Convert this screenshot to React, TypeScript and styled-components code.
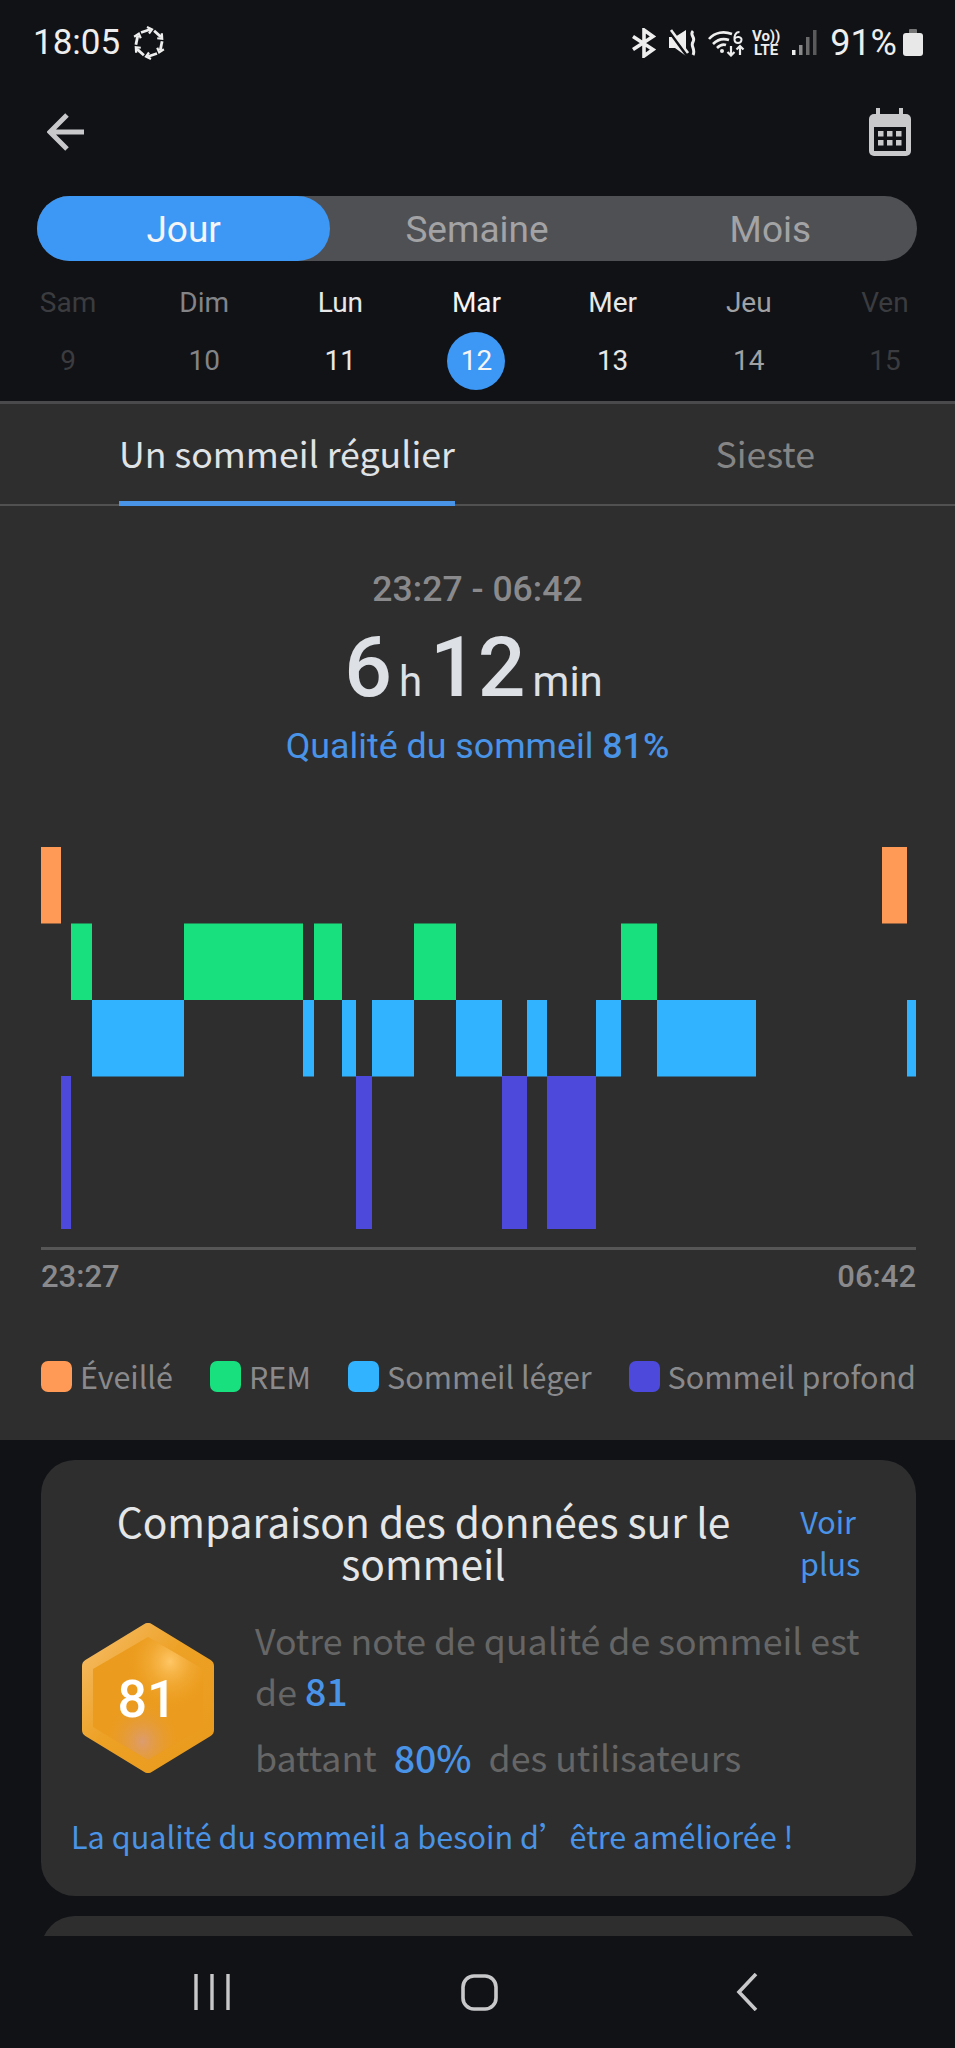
import styled, { createGlobalStyle } from "styled-components"

const GlobalStyle = createGlobalStyle`
  html, body {
    margin: 0;
    padding: 0;
    background: #111216;
  }
  * {
    box-sizing: border-box;
  }
`

const ROBOTO = `Roboto, "Liberation Sans", sans-serif`
const NOTO = `"Noto Sans CJK SC", "Noto Sans", sans-serif`

const Screen = styled.div`
  width: 955px;
  height: 2048px;
  background: #111216;
  display: flex;
  flex-direction: column;
  overflow: hidden;
  font-family: ${ROBOTO};
`

const StatusBar = styled.div`
  height: 84px;
  flex: none;
  display: flex;
  align-items: center;
  justify-content: space-between;
  padding: 1px 32px 0 33px;
  color: #eeeeee;
`

const StatusGroup = styled.div`
  display: flex;
  align-items: center;
`

const StatusText = styled.span<{ $size: number }>`
  font-size: ${(p) => p.$size}px;
  line-height: 40px;
`

const StatusItem = styled.span<{ $gap: number }>`
  display: flex;
  align-items: center;
  margin-left: ${(p) => p.$gap}px;
`

const VoLte = styled.span`
  display: flex;
  flex-direction: column;
  align-items: center;
  font-size: 15px;
  line-height: 14px;
  font-weight: 700;
  width: 28px;
  color: #eeeeee;
`

const TopBar = styled.div`
  height: 96px;
  flex: none;
  display: flex;
  align-items: center;
  justify-content: space-between;
  padding: 0 44px 0 47px;
  margin-bottom: 16px;
`

const Segments = styled.div`
  height: 65px;
  flex: none;
  margin: 0 38px 0 37px;
  background: #4f5053;
  border-radius: 33px;
  display: grid;
  grid-template-columns: repeat(3, 1fr);
`

const Segment = styled.div<{ $active?: boolean }>`
  display: flex;
  align-items: center;
  justify-content: center;
  padding-top: 2px;
  font-size: 37px;
  border-radius: 33px;
  color: ${(p) => (p.$active ? "#f5f5f5" : "#a3a3a5")};
  background: ${(p) => (p.$active ? "#3d97f5" : "transparent")};
`

const Days = styled.div`
  flex: none;
  display: grid;
  grid-template-columns: repeat(7, 1fr);
  padding: 24px 2px 11px 0;
  row-gap: 11px;
`

const WeekDay = styled.div<{ $color: string }>`
  height: 36px;
  line-height: 36px;
  text-align: center;
  font-size: 28px;
  color: ${(p) => p.$color};
`

const DayCell = styled.div`
  height: 58px;
  display: flex;
  align-items: center;
  justify-content: center;
`

const DayNumber = styled.div<{ $color: string; $active?: boolean }>`
  width: 58px;
  height: 58px;
  line-height: 58px;
  text-align: center;
  border-radius: 50%;
  font-size: 28px;
  color: ${(p) => p.$color};
  background: ${(p) => (p.$active ? "#3d97f5" : "transparent")};
`

const Main = styled.div`
  flex: 1;
  min-height: 0;
  overflow: hidden;
  display: flex;
  flex-direction: column;
`

const SleepPanel = styled.section`
  flex: none;
  height: 1039px;
  background: #2e2e2e;
  border-top: 3px solid #4a4a4c;
  display: flex;
  flex-direction: column;
`

const Tabs = styled.div`
  height: 102px;
  flex: none;
  display: flex;
  justify-content: space-between;
  padding: 0 140px 0 119px;
  border-bottom: 2px solid #515151;
`

const Tab = styled.div<{ $active?: boolean }>`
  height: 102px;
  line-height: 98px;
  font-family: ${NOTO};
  font-size: 35.7px;
  color: ${(p) => (p.$active ? "#e0e3e6" : "#858585")};
  border-bottom: 5px solid ${(p) => (p.$active ? "#4a94e8" : "transparent")};
`

const Hero = styled.div`
  display: flex;
  flex-direction: column;
  align-items: center;
  padding-top: 63px;
`

const TimeRange = styled.div`
  font-size: 35.6px;
  line-height: 40px;
  font-weight: 500;
  color: #8a8a8c;
`

const Duration = styled.div`
  display: flex;
  align-items: baseline;
  color: #dde1e6;
  margin-top: 11px;
  height: 96px;
  line-height: 96px;
`

const DurationValue = styled.span`
  font-size: 84px;
  font-weight: 500;
`

const DurationUnit = styled.span`
  font-size: 42px;
  margin: 0 8px 0 7px;
`

const Quality = styled.div`
  margin-top: 9px;
  font-size: 35.8px;
  line-height: 42px;
  color: #4a94e8;
  strong {
    font-weight: 500;
  }
`

const ChartBlock = styled.div`
  margin: 80px 39px 0 41px;
`

const ChartSvg = styled.svg`
  display: block;
  width: 875px;
  height: 382px;
`

const Axis = styled.div`
  margin-top: 18px;
  border-top: 3px solid #565656;
  display: flex;
  justify-content: space-between;
  padding-top: 9px;
  font-size: 31px;
  line-height: 36px;
  font-weight: 500;
  color: #8a8a8c;
`

const Legend = styled.div`
  margin: 63px 39px 0 41px;
  display: flex;
  justify-content: space-between;
  font-family: ${NOTO};
`

const LegendItem = styled.div`
  display: flex;
  align-items: center;
  gap: 8px;
  font-size: 30.5px;
  line-height: 36px;
  color: #8a8a8c;
`

const Swatch = styled.span<{ $color: string }>`
  width: 31px;
  height: 31px;
  border-radius: 7px;
  background: ${(p) => p.$color};
`

const Card = styled.section`
  flex: none;
  margin: 20px 39px 0 41px;
  height: 436px;
  background: #2e2e2e;
  border-radius: 34px;
  padding: 40px 60px 0 30px;
  font-family: ${NOTO};
`

const NextCard = styled(Card)`
  height: 100px;
`

const CardHead = styled.div`
  display: flex;
  align-items: flex-start;
`

const CardTitle = styled.h2`
  flex: 1;
  margin: 0;
  padding-right: 24px;
  text-align: center;
  font-size: 40.7px;
  line-height: 42px;
  font-weight: 400;
  color: #e4e6e8;
`

const MoreLink = styled.a`
  width: 56px;
  text-align: center;
  font-size: 30.5px;
  line-height: 42px;
  color: #4a94e8;
`

const ScoreRow = styled.div`
  display: flex;
  align-items: flex-start;
  margin-top: 31px;
`

const Badge = styled.svg`
  flex: none;
  margin: 8px 41px 0 11px;
  width: 132px;
  height: 150px;
`

const ScoreText = styled.div`
  flex: none;
  width: 610px;
  font-size: 35.7px;
  color: #666666;
`

const ScoreLine = styled.p`
  margin: 0;
  line-height: 50px;
`

const ScoreSecond = styled(ScoreLine)`
  margin-top: 16px;
  display: flex;
  gap: 17px;
`

const Blue = styled.b`
  color: #4a94e8;
  font-weight: 500;
  font-size: 37.5px;
`

const Advice = styled.p`
  margin: 34px 0 0;
  font-size: 30.6px;
  line-height: 40px;
  color: #4a94e8;
`

const NavBar = styled.nav`
  height: 112px;
  flex: none;
  display: grid;
  grid-template-columns: repeat(3, 1fr);
  padding: 0 74px 0 78px;
  background: #111216;
  position: relative;
`

const NavSlot = styled.div`
  display: flex;
  align-items: center;
  justify-content: center;
`

const days = [
  { d: "Sam", n: "9", color: "#3b3c3f" },
  { d: "Dim", n: "10", color: "#838487" },
  { d: "Lun", n: "11", color: "#e8e8e8" },
  { d: "Mar", n: "12", color: "#f5f5f5", active: true },
  { d: "Mer", n: "13", color: "#e8e8e8" },
  { d: "Jeu", n: "14", color: "#a0a1a3" },
  { d: "Ven", n: "15", color: "#3b3c3f" },
]

const colors = { awake: "#ff9a56", rem: "#18e07e", light: "#31b3ff", deep: "#4d4adb" }

// row, x start, x end in px of the chart
const stages: [keyof typeof colors, number, number, number][] = [
  ["awake", 0, 0, 20],
  ["awake", 0, 841, 866],
  ["rem", 1, 30, 51],
  ["rem", 1, 143, 262],
  ["rem", 1, 273, 301],
  ["rem", 1, 373, 415],
  ["rem", 1, 580, 616],
  ["light", 2, 51, 143],
  ["light", 2, 262, 273],
  ["light", 2, 301, 315],
  ["light", 2, 331, 373],
  ["light", 2, 415, 461],
  ["light", 2, 486, 506],
  ["light", 2, 555, 580],
  ["light", 2, 616, 715],
  ["light", 2, 866, 875],
  ["deep", 3, 20, 30],
  ["deep", 3, 315, 331],
  ["deep", 3, 461, 486],
  ["deep", 3, 506, 555],
]

const SyncIcon = () => (
  <svg width="34" height="34" viewBox="0 0 34 34" style={{ marginLeft: 12 }}>
    {[0, 60, 120, 180, 240, 300].map((a) => (
      <g key={a} transform={`rotate(${a} 17 17)`} stroke="#eeeeee" fill="none">
        <path d="M9 6.5 L18 3.5" strokeWidth="2.8" />
        <path d="M15 1 L20 3.5 L17 7.5" strokeWidth="2.2" />
      </g>
    ))}
  </svg>
)

const BluetoothIcon = () => (
  <svg width="26" height="30" viewBox="0 0 26 30" fill="none" stroke="#eeeeee" strokeWidth="3.6">
    <path d="M2 8.5 L22 21.5 L13 28 V2 L22 8.5 L2 21.5" />
  </svg>
)

const MuteIcon = () => (
  <svg width="27" height="28" viewBox="0 0 27 28">
    <path d="M0 8 H6 L17 1 V27 L6 19 H0 Z" fill="#eeeeee" />
    <path d="M0 2 L19 28" stroke="#111216" strokeWidth="3" />
    <path d="M2 1 L19 24" stroke="#eeeeee" strokeWidth="2.6" />
    <path d="M24 2 C20 6 27 8 24 13 C21 17 27 20 24 26" stroke="#eeeeee" strokeWidth="3" fill="none" />
  </svg>
)

const WifiIcon = () => (
  <svg width="37" height="28" viewBox="0 0 37 28" fill="none" stroke="#eeeeee">
    <path d="M1 10 C7 3 16 2 24 5" strokeWidth="2.6" />
    <path d="M5 15 C10 10 15 9 21 11" strokeWidth="2.6" />
    <path d="M9 19 C12 16 15 15 18 16" strokeWidth="2.6" />
    <circle cx="14" cy="22" r="2" fill="#eeeeee" stroke="none" />
    <path d="M31.5 3 C27 3 26 8 26.5 11 C27 15 33 15 33.5 11 C34 7.5 28 7 26.5 10" strokeWidth="2" />
    <path d="M23 17 V26 M19.5 23 L23 26.5 L26.5 23" strokeWidth="2.2" />
    <path d="M32 26 V17 M28.5 20.5 L32 17 L35.5 20.5" strokeWidth="2.2" />
  </svg>
)

const SignalIcon = () => (
  <svg width="25" height="26" viewBox="0 0 25 26">
    <rect x="0" y="20" width="3.5" height="5" fill="#eeeeee" />
    <rect x="7" y="15" width="3.5" height="10" fill="#8a8a8a" />
    <rect x="14" y="7" width="3.5" height="18" fill="#6a6a6a" />
    <rect x="21" y="0" width="3.5" height="25" fill="#5a5a5a" />
  </svg>
)

const BatteryIcon = () => (
  <svg width="20" height="27" viewBox="0 0 20 27">
    <rect x="6" y="0" width="8" height="6" rx="1" fill="#777777" />
    <rect x="0" y="4" width="20" height="23" rx="3" fill="#e8e8e8" />
  </svg>
)

const ArrowIcon = () => (
  <svg width="38" height="38" viewBox="0 0 38 38" fill="none" stroke="#c9c9cc" strokeWidth="5">
    <path d="M37 19 H4 M20 2 L3 19 L20 36" />
  </svg>
)

const CalendarIcon = () => (
  <svg width="42" height="48" viewBox="0 0 42 48">
    <rect x="7" y="0" width="4" height="10" fill="#c9c9cc" />
    <rect x="30" y="0" width="4" height="10" fill="#c9c9cc" />
    <rect x="0" y="6" width="42" height="42" rx="5" fill="#c9c9cc" />
    <rect x="5" y="19" width="32" height="24" fill="#111216" />
    {[9, 18, 27].map((x) =>
      [23, 32].map((y) => <rect key={`${x}-${y}`} x={x} y={y} width="5.5" height="5.5" fill="#c9c9cc" />)
    )}
  </svg>
)

const HexBadge = () => (
  <Badge viewBox="0 0 132 150">
    <defs>
      <linearGradient id="hexEdge" x1="0" y1="0" x2="1" y2="1">
        <stop offset="0" stopColor="#f6bc66" />
        <stop offset="0.45" stopColor="#eda125" />
        <stop offset="1" stopColor="#e89a1c" />
      </linearGradient>
      <radialGradient id="hexGlowTop" cx="0.7" cy="0.2" r="0.4">
        <stop offset="0" stopColor="#ffc766" />
        <stop offset="1" stopColor="#ec9c1c" stopOpacity="0" />
      </radialGradient>
      <radialGradient id="hexGlowBottom" cx="0.45" cy="0.85" r="0.35">
        <stop offset="0" stopColor="#dc9c70" />
        <stop offset="1" stopColor="#e99a20" stopOpacity="0" />
      </radialGradient>
    </defs>
    <path
      d="M66 7 L125 43 V107 L66 143 L7 107 V43 Z"
      fill="url(#hexEdge)"
      stroke="url(#hexEdge)"
      strokeWidth="14"
      strokeLinejoin="round"
    />
    <path d="M66 14 L121 46 V104 L66 137 L11 104 V46 Z" fill="#eb9c1e" />
    <path d="M66 14 L121 46 V104 L66 137 L11 104 V46 Z" fill="url(#hexGlowTop)" />
    <path d="M66 14 L121 46 V104 L66 137 L11 104 V46 Z" fill="url(#hexGlowBottom)" />
    <text x="65" y="94" textAnchor="middle" fontFamily="Roboto" fontWeight="500" fontSize="52" fill="#ffffff">
      81
    </text>
  </Badge>
)

export default function App() {
  return (
    <Screen>
      <GlobalStyle />
      <StatusBar>
        <StatusGroup>
          <StatusText $size={35}>18:05</StatusText>
          <SyncIcon />
        </StatusGroup>
        <StatusGroup>
          <StatusItem $gap={0}>
            <BluetoothIcon />
          </StatusItem>
          <StatusItem $gap={12}>
            <MuteIcon />
          </StatusItem>
          <StatusItem $gap={12}>
            <WifiIcon />
          </StatusItem>
          <StatusItem $gap={7}>
            <VoLte>
              <span>Vo))</span>
              <span>LTE</span>
            </VoLte>
          </StatusItem>
          <StatusItem $gap={12}>
            <SignalIcon />
          </StatusItem>
          <StatusItem $gap={13}>
            <StatusText $size={36}>91%</StatusText>
          </StatusItem>
          <StatusItem $gap={6}>
            <BatteryIcon />
          </StatusItem>
        </StatusGroup>
      </StatusBar>

      <TopBar>
        <ArrowIcon />
        <CalendarIcon />
      </TopBar>

      <Segments>
        <Segment $active>Jour</Segment>
        <Segment>Semaine</Segment>
        <Segment>Mois</Segment>
      </Segments>

      <Days>
        {days.map((day) => (
          <WeekDay key={day.d} $color={day.color}>
            {day.d}
          </WeekDay>
        ))}
        {days.map((day) => (
          <DayCell key={day.n}>
            <DayNumber $color={day.color} $active={day.active}>
              {day.n}
            </DayNumber>
          </DayCell>
        ))}
      </Days>

      <Main>
        <SleepPanel>
          <Tabs>
            <Tab $active>Un sommeil régulier</Tab>
            <Tab>Sieste</Tab>
          </Tabs>

          <Hero>
            <TimeRange>23:27 - 06:42</TimeRange>
            <Duration>
              <DurationValue>6</DurationValue>
              <DurationUnit>h</DurationUnit>
              <DurationValue>12</DurationValue>
              <DurationUnit>min</DurationUnit>
            </Duration>
            <Quality>
              Qualité du sommeil <strong>81%</strong>
            </Quality>
          </Hero>

          <ChartBlock>
            <ChartSvg viewBox="0 0 875 382">
              {stages.map(([kind, row, x1, x2]) => (
                <rect
                  key={`${kind}-${x1}`}
                  x={x1}
                  y={row === 3 ? 229 : row * 76.5}
                  width={x2 - x1}
                  height={row === 3 ? 153 : 76.5}
                  fill={colors[kind]}
                />
              ))}
            </ChartSvg>
            <Axis>
              <span>23:27</span>
              <span>06:42</span>
            </Axis>
          </ChartBlock>

          <Legend>
            <LegendItem>
              <Swatch $color={colors.awake} />
              Éveillé
            </LegendItem>
            <LegendItem>
              <Swatch $color={colors.rem} />
              REM
            </LegendItem>
            <LegendItem>
              <Swatch $color={colors.light} />
              Sommeil léger
            </LegendItem>
            <LegendItem>
              <Swatch $color={colors.deep} />
              Sommeil profond
            </LegendItem>
          </Legend>
        </SleepPanel>

        <Card>
          <CardHead>
            <CardTitle>Comparaison des données sur le sommeil</CardTitle>
            <MoreLink>Voir plus</MoreLink>
          </CardHead>
          <ScoreRow>
            <HexBadge />
            <ScoreText>
              <ScoreLine>Votre note de qualité de sommeil est</ScoreLine>
              <ScoreLine>
                de <Blue>81</Blue>
              </ScoreLine>
              <ScoreSecond>
                <span>battant</span>
                <Blue>80%</Blue>
                <span>des utilisateurs</span>
              </ScoreSecond>
            </ScoreText>
          </ScoreRow>
          <Advice>La qualité du sommeil a besoin d’être améliorée !</Advice>
        </Card>
        <NextCard />
      </Main>

      <NavBar>
        <NavSlot>
          <svg width="36" height="36" viewBox="0 0 36 36" fill="none" stroke="#c8c8ca" strokeWidth="3.4">
            <path d="M2 0 V36 M18 0 V36 M34 0 V36" />
          </svg>
        </NavSlot>
        <NavSlot>
          <svg width="37" height="37" viewBox="0 0 37 37" fill="none" stroke="#c8c8ca" strokeWidth="3.6">
            <rect x="2" y="2" width="33" height="33" rx="11" />
          </svg>
        </NavSlot>
        <NavSlot>
          <svg width="22" height="38" viewBox="0 0 22 38" fill="none" stroke="#c8c8ca" strokeWidth="3.6">
            <path d="M20 1 L3 19 L20 37" />
          </svg>
        </NavSlot>
      </NavBar>
    </Screen>
  )
}
